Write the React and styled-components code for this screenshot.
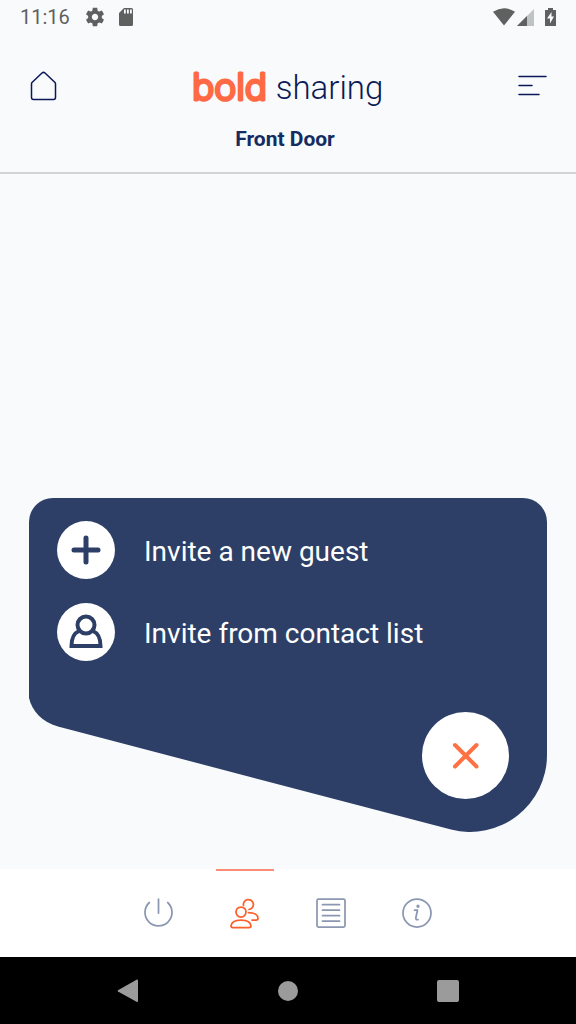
import React from "react";
import styled, { createGlobalStyle } from "styled-components";

const GlobalStyle = createGlobalStyle`
  *, *::before, *::after { box-sizing: border-box; }
  body { margin: 0; background: #f8fafc; font-family: Roboto, sans-serif; }
  button { font: inherit; color: inherit; border: 0; padding: 0; background: none; cursor: pointer; }
  svg { display: block; flex: none; overflow: visible; }
`;

const Screen = styled.div`
  display: flex;
  flex-direction: column;
  min-height: 100vh;
`;

const StatusBar = styled.div`
  display: flex;
  align-items: center;
  height: 34px;
  padding: 0 19px 0 20px;
  color: #5f6060;
`;

const Clock = styled.time`
  font-size: 20px;
  line-height: 24px;
  margin-right: 14px;
`;

const StatusGroup = styled.div`
  display: flex;
  align-items: center;
  gap: ${(p) => p.$gap}px;
  margin-left: ${(p) => (p.$end ? "auto" : "0")};
`;

const Header = styled.header`
  display: flex;
  flex-direction: column;
  height: 140px;
  padding: 28px 28px 0;
  border-bottom: 2px solid #d2d4d4;
`;

const HeaderRow = styled.div`
  display: flex;
  align-items: center;
  justify-content: space-between;
  height: 48px;
`;

const IconButton = styled.button`
  display: flex;
  color: #0a1758;
`;

const Brand = styled.h1`
  display: flex;
  align-items: center;
  gap: 5px;
  margin: 0;
  font-weight: 300;
`;

const BrandName = styled.text`
  font: 300 37px Inter, sans-serif;
  fill: #ff6a45;
  stroke: #ff6a45;
  stroke-width: 3px;
  stroke-linejoin: round;
`;

const Section = styled.span`
  padding-top: 4px;
  font-size: 33px;
  line-height: 44px;
  color: #0b1b57;
`;

const DoorName = styled.h2`
  margin: 17px 0 0;
  padding-right: 6px;
  text-align: center;
  font-size: 21px;
  line-height: 24px;
  font-weight: 700;
  color: #142c61;
`;

const Main = styled.main`
  flex: 1;
  display: flex;
  flex-direction: column;
  justify-content: flex-end;
  padding: 29px 29px 37px;
`;

const InviteCard = styled.section`
  display: flex;
  flex-direction: column;
  gap: 24px;
  padding: 23px 38px 33px 28px;
  background: #2d3f66;
  clip-path: url(#card-shape);
`;

const InviteOption = styled.button`
  display: flex;
  align-items: center;
  gap: 29px;
  color: #fff;
  text-align: left;
`;

const OptionLabel = styled.span`
  padding-top: 4px;
  font-size: 28px;
  line-height: 36px;
`;

const Disc = styled.span`
  display: grid;
  place-items: center;
  flex: none;
  width: 58px;
  height: 58px;
  border-radius: 50%;
  background: #fff;
  color: #2d3f66;
`;

const CloseButton = styled.button`
  display: grid;
  place-items: center;
  align-self: flex-end;
  width: 87px;
  height: 87px;
  margin-top: 27px;
  border-radius: 50%;
  background: #fff;
  color: #ff7043;
`;

const TabBar = styled.nav`
  display: flex;
  justify-content: center;
  gap: 28px;
  height: 88px;
  background: #fff;
`;

const Tab = styled.button`
  display: grid;
  place-items: center;
  width: 58px;
  box-shadow: inset 0 2px ${(p) => (p.$active ? "#ff8a75" : "transparent")};
  color: ${(p) => (p.$active ? "#fb5f2b" : "#8c98b1")};
`;

const SystemBar = styled.div`
  display: flex;
  justify-content: center;
  height: 67px;
  background: #000;
`;

const SystemKey = styled.button`
  display: grid;
  place-items: center;
  width: 160px;
  color: #9b9b9b;
`;

function CardShape() {
  return (
    <svg width="0" height="0" style={{ position: "absolute" }} aria-hidden="true">
      <clipPath id="card-shape" clipPathUnits="objectBoundingBox">
        <path
          transform="scale(0.0019305 0.002994)"
          d="M0 24A24 24 0 0 1 24 0H494A24 24 0 0 1 518 24V257A77 77 0 0 1 422 331.6L29 228.5C13 224 3 213 0 200Z"
        />
      </clipPath>
    </svg>
  );
}

const Line = ({ w, h = w, stroke = 2, children }) => (
  <svg width={w} height={h} viewBox={`0 0 ${w} ${h}`} fill="none" stroke="currentColor"
    strokeWidth={stroke} strokeLinecap="round" strokeLinejoin="round" aria-hidden="true">
    {children}
  </svg>
);

const Solid = ({ w, h = w, box, children }) => (
  <svg width={w} height={h} viewBox={box || `0 0 ${w} ${h}`} fill="currentColor" aria-hidden="true">
    {children}
  </svg>
);

export default function App() {
  return (
    <Screen>
      <GlobalStyle />
      <CardShape />
      <StatusBar>
        <Clock>11:16</Clock>
        <StatusGroup $gap={13}>
          <Solid w={22} box="0 0 24 24">
            <path d="M19.43 12.98c.04-.32.07-.64.07-.98s-.03-.66-.07-.98l2.11-1.65c.19-.15.24-.42.12-.64l-2-3.46c-.12-.22-.39-.3-.61-.22l-2.49 1c-.52-.4-1.08-.73-1.69-.98l-.38-2.65C14.46 2.18 14.25 2 14 2h-4c-.25 0-.46.18-.49.42l-.38 2.65c-.61.25-1.17.59-1.69.98l-2.49-1c-.23-.09-.49 0-.61.22l-2 3.46c-.13.22-.07.49.12.64l2.11 1.65c-.04.32-.07.65-.07.98s.03.66.07.98l-2.11 1.65c-.19.15-.24.42-.12.64l2 3.46c.12.22.39.3.61.22l2.49-1c.52.4 1.08.73 1.69.98l.38 2.65c.03.24.24.42.49.42h4c.25 0 .46-.18.49-.42l.38-2.65c.61-.25 1.17-.59 1.69-.98l2.49 1c.23.09.49 0 .61-.22l2-3.46c.12-.22.07-.49-.12-.64l-2.11-1.65zM12 15.5c-1.93 0-3.5-1.57-3.5-3.5s1.57-3.5 3.5-3.5 3.5 1.57 3.5 3.5-1.57 3.5-3.5 3.5z" />
          </Solid>
          <Solid w={14} h={18}>
            <path fillRule="evenodd" d="M5 0H12.5Q14 0 14 1.5V16.5Q14 18 12.5 18H1.5Q0 18 0 16.5V5ZM5 1.5V5.5H6.8V1.5ZM8 1.5V5.5H9.8V1.5ZM11 1.5V5.5H12.8V1.5Z" />
          </Solid>
        </StatusGroup>
        <StatusGroup $end $gap={0}>
          <Solid w={22} h={18}>
            <path d="M0 3.8Q11-3.3 22 3.8L11 17.5Z" />
          </Solid>
          <Solid w={28} h={18}>
            <path d="M19 1V18H2Z" opacity=".36" />
            <path d="M12 8V18H2Z" />
          </Solid>
          <Solid w={14} h={18} box="-2 0 14 18">
            <path fillRule="evenodd" d="M3 0H8V2H11V18H0V2H3ZM6.5 4L2 10.5H5V15.5L9 8.5H6.5Z" />
          </Solid>
        </StatusGroup>
      </StatusBar>

      <Header>
        <HeaderRow>
          <IconButton aria-label="Home">
            <Line w={30}>
              <path d="M4 11.5L14 2Q15.5 .7 17 2L27 11.5Q27.5 12 27.5 13V26.5Q27.5 28.5 25.5 28.5H5.5Q3.5 28.5 3.5 26.5V13Q3.5 12 4 11.5Z" strokeWidth="1.5" />
            </Line>
          </IconButton>
          <Brand>
            <svg width="78" height="48" viewBox="0 0 78 48" role="img" aria-label="bold">
              <BrandName x="-1" y="38">bold</BrandName>
            </svg>
            <Section>sharing</Section>
          </Brand>
          <IconButton aria-label="Menu">
            <Line w={30} stroke={1.5}>
              <path d="M1 5.5H28M1 14.5H14M1 23.5H21" />
            </Line>
          </IconButton>
        </HeaderRow>
        <DoorName>Front Door</DoorName>
      </Header>

      <Main>
        <InviteCard>
          <InviteOption>
            <Disc>
              <Line w={30} stroke={5}>
                <path d="M15 3V27M3 15H27" />
              </Line>
            </Disc>
            <OptionLabel>Invite a new guest</OptionLabel>
          </InviteOption>
          <InviteOption>
            <Disc>
              <Line w={34} stroke={4}>
                <circle cx="17" cy="10" r="8.5" />
                <path d="M10 16C4.500 18.500 2.500 22.500 2.500 31H31.500C31.500 22.500 29.500 18.500 24 16" strokeLinecap="butt" strokeLinejoin="miter" />
              </Line>
            </Disc>
            <OptionLabel>Invite from contact list</OptionLabel>
          </InviteOption>
          <CloseButton aria-label="Close">
            <Line w={26} stroke={4}>
              <path d="M2 2L23.5 23.5M23.5 2L2 23.5" />
            </Line>
          </CloseButton>
        </InviteCard>
      </Main>

      <TabBar>
        <Tab aria-label="Lock control">
          <Line w={30} stroke={1.75}>
            <path d="M14.5 1V15M5.3 4.5A13.5 13.5 0 1 0 23.7 4.5" />
          </Line>
        </Tab>
        <Tab $active aria-label="Sharing">
          <Line w={30} h={32} stroke={1.75}>
            <circle cx="11" cy="15" r="5" />
            <path d="M1 29Q1.500 23 11 23T21 29Q21 30.500 19 30.500H3Q1 30.500 1 29ZM13.500 8.500A5 5 0 1 1 19 12.500M18.500 15.500C24.500 15.500 28 18 28 21.500Q28 23 26 23H22" />
          </Line>
        </Tab>
        <Tab aria-label="Activity log">
          <Line w={30} stroke={1.75}>
            <rect x="1" y="1" width="28" height="28" rx="1.5" />
            <path d="M6.5 6.7H23.5M6.5 12.2H23.5M6.5 17.7H23.5M6.5 23.2H23.5" />
          </Line>
        </Tab>
        <Tab aria-label="Information">
          <Line w={30} stroke={1.75}>
            <circle cx="15" cy="15" r="14" />
            <path d="M12.5 12H15.5L13.9 19.5Q13.5 22.3 16 21.6" />
            <circle cx="16" cy="8.2" r=".8" fill="currentColor" />
          </Line>
        </Tab>
      </TabBar>

      <SystemBar>
        <SystemKey aria-label="Back">
          <Solid w={22} h={24}>
            <path d="M1 11.2L19.5 .7Q21 0 21 1.5V22Q21 23.5 19.5 22.8L1 12.5Q0 11.9 1 11.2Z" />
          </Solid>
        </SystemKey>
        <SystemKey aria-label="Home screen">
          <Solid w={20}>
            <circle cx="10" cy="10" r="10" />
          </Solid>
        </SystemKey>
        <SystemKey aria-label="Recent apps">
          <Solid w={22}>
            <rect width="22" height="22" rx="2" />
          </Solid>
        </SystemKey>
      </SystemBar>
    </Screen>
  );
}
